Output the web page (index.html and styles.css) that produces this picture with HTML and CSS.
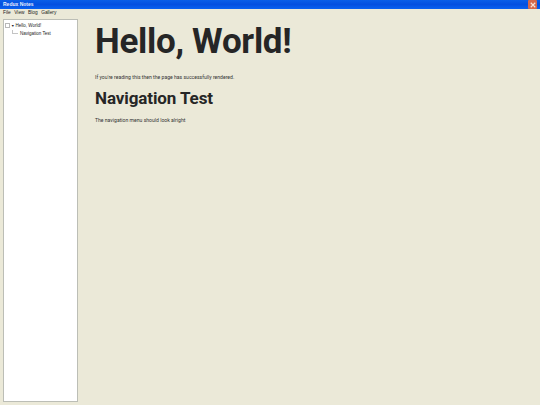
FILE: index.html
```html
<!DOCTYPE html>
<html lang="en">
<head>
<meta charset="utf-8">
<title>Redux Notes</title>
<link rel="stylesheet" href="styles.css">
</head>
<body>
<div class="window">
  <header class="titlebar">
    <span class="title">Redux Notes</span>
    <button class="close" aria-label="Close">
      <svg viewBox="0 0 8 8" width="6" height="6"><path d="M1 1L7 7M7 1L1 7" stroke="#f6e4dc" stroke-width="1.5"/></svg>
    </button>
  </header>
  <nav class="menubar">
    <span>File</span><span>View</span><span>Blog</span><span>Gallery</span>
  </nav>
  <div class="main">
    <aside class="tree">
      <div class="node root">
        <span class="expander"></span>
        <span class="arrow">▼</span>
        <span>Hello, World!</span>
      </div>
      <div class="node child">
        <span class="connector"></span>
        <span>Navigation Test</span>
      </div>
    </aside>
    <main class="content">
      <h1>Hello, World!</h1>
      <p class="first">If you're reading this then the page has successfully rendered.</p>
      <h2>Navigation Test</h2>
      <p class="second">The navigation menu should look alright</p>
    </main>
  </div>
</div>
</body>
</html>
```
FILE: styles.css
```css
* { box-sizing: border-box; }
html, body { margin: 0; height: 100%; }
body { font-family: Roboto, "Noto Sans", sans-serif; background: #ebe9d8; overflow: hidden; }
.window { width: 540px; height: 405px; display: flex; flex-direction: column; }
.titlebar {
  height: 9px; flex: none; display: flex; align-items: center; justify-content: space-between;
  background: linear-gradient(#0a5fe8, #0450e0 50%, #0a62f0);
  padding: 0 3px 0 3px; color: #e8eeff; font: bold 5px/9px "Liberation Sans", sans-serif;
}
.close {
  width: 9px; height: 9px; padding: 0; border: 0; border-radius: 1px;
  background: #d8694a; display: flex; align-items: center; justify-content: center;
}
.menubar {
  height: 8px; flex: none; display: flex; gap: 3.5px; padding-left: 3px;
  font: 4.8px/7px "Liberation Sans", sans-serif; color: #222;
}
.main { flex: 1; display: flex; padding: 2px 0 3px 3px; min-height: 0; }
.tree {
  width: 75px; flex: none; background: #fff; border: 1px solid #bcbeb6;
  padding: 2px 1px; font: 4.5px/8px "Liberation Sans", sans-serif; color: #222;
}
.node { display: flex; align-items: center; height: 8px; white-space: nowrap; }
.expander { width: 5px; height: 5px; border: 1px solid #b8b8b8; margin: -2px 1px 0 0; flex: none; }
.arrow { font-size: 3.6px; margin-right: 1px; }
.child { padding-left: 7px; }
.connector { width: 6px; height: 4px; border-left: 1px solid #c4c4c4; border-bottom: 1px solid #c4c4c4; margin: -4px 2px 0 0; flex: none; }
.content { padding: 0 0 0 17px; color: #262626; }
h1 { margin: 3px 0 0; font-size: 35px; line-height: 40px; font-weight: 700; letter-spacing: -0.3px; }
h2 { margin: 7px 0 0; font-size: 17px; line-height: 20px; font-weight: 700; letter-spacing: -0.1px; }
p { margin: 0; font-size: 5.1px; line-height: 8px; color: #333; }
.first { margin-top: 11px; }
.second { margin-top: 8px; }
```
